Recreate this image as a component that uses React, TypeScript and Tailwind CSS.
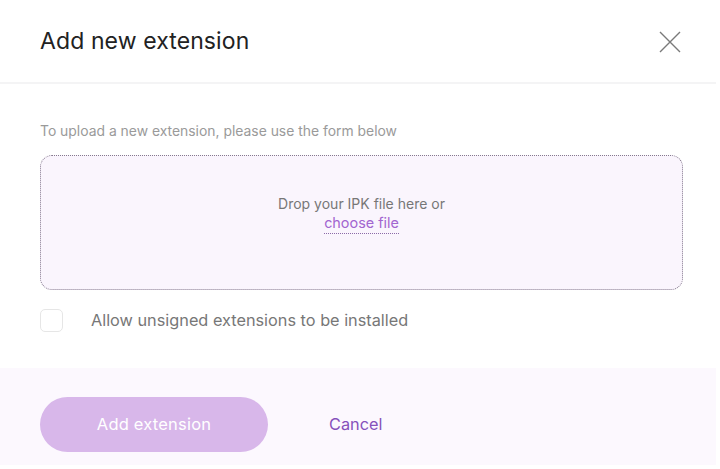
export default function App() {
  return (
    <div className="w-[720px] h-[469px] bg-white font-['Inter',sans-serif] overflow-hidden">
      <div className="w-[716px]">
        <div className="flex items-center justify-between h-[84px] pl-10 pr-[35px] border-b-2 border-[#f4f4f5]">
          <h1 className="text-[23px] text-[#222] tracking-[0.1px] mt-[1px]">Add new extension</h1>
          <svg width="22" height="22" viewBox="0 0 22 22" className="mt-[1px]" fill="none" stroke="#7a7a7a" strokeWidth="1.4">
            <path d="M1 1 21 21M21 1 1 21" />
          </svg>
        </div>

        <div className="px-10 pt-[39px]">
          <p className="text-[13.9px] text-[#9a9a9a] leading-4">To upload a new extension, please use the form below</p>
          <div className="mt-[16px] w-[643px] h-[135px] rounded-[12px] border border-dotted border-[#85798e] bg-[#faf5fd] flex flex-col items-center pt-[38px]">
            <p className="text-[14px] text-[#777] leading-[19px]">Drop your IPK file here or</p>
            <span className="text-[14.4px] text-[#a266d0] leading-[19px] border-b border-dotted border-[#8b6aa8] pb-[1px]">
              choose file
            </span>
          </div>

          <label className="flex items-center mt-[19px] h-[22px]">
            <span className="w-[23px] h-[23px] rounded-[5px] border border-[#e6e6e6] bg-white" />
            <span className="ml-[28px] text-[16.3px] text-[#777]">Allow unsigned extensions to be installed</span>
          </label>
        </div>

        <div className="mt-[37px] h-[97px] bg-[#fcf8fe] flex items-center pl-10 pt-[16px]">
          <button className="w-[228px] h-[55px] rounded-full bg-[#d8b7ea] text-white text-[16.5px] tracking-[0.2px]">
            Add extension
          </button>
          <button className="ml-[61px] text-[16.3px] text-[#8651bb]">Cancel</button>
        </div>
      </div>
    </div>
  );
}
